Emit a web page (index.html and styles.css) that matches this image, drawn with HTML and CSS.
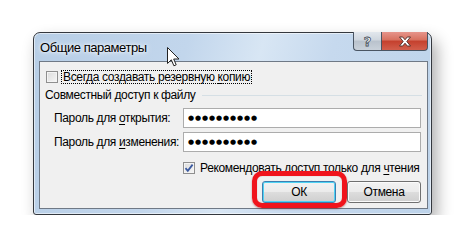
FILE: index.html
```html
<!DOCTYPE html>
<html lang="ru">
<head>
    <meta charset="UTF-8">
    <title>Общие параметры</title>
    <link rel="stylesheet" href="styles.css">
</head>
<body>
    <div class="window">
        <div class="titlebar">
            <span class="title">Общие параметры</span>
            <div class="caption">
                <div class="cap-btn help">?</div>
                <div class="cap-btn close">
                    <svg width="14" height="11" viewBox="0 0 14 11">
                        <path d="M1.5 1h3.2L7 3.8 9.3 1h3.2L8.8 5.5l3.7 4.5H9.3L7 7.2 4.7 10H1.5l3.7-4.5z" fill="#fff" stroke="#4b2a26" stroke-width="0.9"/>
                    </svg>
                </div>
            </div>
        </div>
        <div class="client">
            <div class="opt-row">
                <span class="check"></span>
                <span class="focus">Всегда создавать резервную <u>к</u>опию</span>
            </div>
            <div class="group-head">
                <span>Совместный доступ к файлу</span>
                <span class="rule"></span>
            </div>
            <div class="field">
                <span class="field-label">Пароль для <u>о</u>ткрытия:</span>
                <div class="pwd">●●●●●●●●●●</div>
            </div>
            <div class="field">
                <span class="field-label">Пароль для <u>и</u>зменения:</span>
                <div class="pwd">●●●●●●●●●●</div>
            </div>
            <div class="opt-row readonly">
                <span class="check on">
                    <svg width="10" height="10" viewBox="0 0 10 10">
                        <path d="M1.5 5.2l2.3 2.6L8.6 1.6" fill="none" stroke="#3b5aa0" stroke-width="1.8"/>
                    </svg>
                </span>
                <span>Рекомендовать доступ только для <u>ч</u>тения</span>
            </div>
            <div class="buttons">
                <div class="btn default">ОК<span class="mark"></span></div>
                <div class="btn">Отмена</div>
            </div>
        </div>
    </div>
    <svg class="cursor" width="13" height="20" viewBox="0 0 13 20">
        <path d="M0.5 0.5v16l3.8-3.7 2.6 6 2.3-1-2.5-5.8h5.3z" fill="#fff" stroke="#222" stroke-width="1"/>
    </svg>
</body>
</html>
```

FILE: styles.css
```css
*{
    margin: 0;
    padding: 0;
    box-sizing: border-box;
}
body{
    background: #fff;
    font-family: "Liberation Sans", Arial, sans-serif;
    font-size: 12px;
    letter-spacing: -0.35px;
    color: #000;
    white-space: nowrap;
}
u{
    text-decoration: underline;
    text-underline-offset: 2px;
}
.window{
    width: 399px;
    height: 183px;
    margin: 32px 0 0 33px;
    padding: 0 3px 5px 5px;
    border: 1px solid #34383e;
    border-radius: 7px 7px 3px 3px;
    background: linear-gradient(105deg, #b7cee6 0%, #c2d6ec 35%, #d8e6f4 52%, #c6d9ee 68%, #bdd3ea 100%);
    box-shadow: 5px 8px 16px rgba(0, 0, 0, 0.32), inset 0 0 0 1px rgba(255, 255, 255, 0.55);
}
.titlebar{
    height: 28px;
    display: flex;
    justify-content: space-between;
}
.title{
    padding: 7px 0 0 1px;
    font-size: 13px;
    letter-spacing: -0.45px;
    text-shadow: 0 0 6px #fff, 0 0 3px #fff;
}
.caption{
    display: flex;
    margin-top: -1px;
}
.cap-btn{
    height: 19px;
    border: 1px solid #4a5563;
    border-top: none;
    display: flex;
    justify-content: center;
    align-items: center;
}
.help{
    width: 28px;
    border-right: none;
    border-radius: 0 0 0 4px;
    background: linear-gradient(#e2e7ed, #cfd6de 45%, #b9c2cc 50%, #c9d1da);
    color: #fff;
    font-family: "DejaVu Sans", sans-serif;
    font-weight: bold;
    font-size: 13px;
    letter-spacing: 0;
    -webkit-text-stroke: 0.8px #434c58;
}
.close{
    width: 47px;
    border-radius: 0 0 4px 0;
    background: linear-gradient(#e6958b, #d7705f 45%, #c4402d 50%, #d25e4c);
}
.client{
    height: 148px;
    border: 1px solid #6f7986;
    background: #f0f0f0;
    display: flex;
    flex-direction: column;
}
.opt-row{
    display: flex;
    align-items: center;
    height: 14px;
    margin-top: 8px;
    padding-left: 6px;
}
.check{
    flex-shrink: 0;
    width: 12px;
    height: 12px;
    border: 1px solid #8f8f8f;
    background: linear-gradient(135deg, #dcdcdc, #f6f6f6);
    box-shadow: inset 0 0 0 1px #f4f4f4;
    margin-right: 3px;
    display: flex;
    justify-content: center;
    align-items: center;
}
.check.on{
    margin-right: 5px;
}
.focus{
    border: 1px dotted #000;
    padding: 0 1px;
    line-height: 12px;
}
.group-head{
    display: flex;
    align-items: center;
    margin-top: 4px;
    height: 14px;
    padding: 0 5px 0 5px;
}
.rule{
    flex: 1;
    height: 1px;
    margin: 0 0 0 6px;
    background: #d5dfe5;
}
.field{
    display: flex;
    align-items: center;
    padding-left: 14px;
    margin-top: 6px;
}
.field + .field{
    margin-top: 4px;
}
.field-label{
    flex-shrink: 0;
    width: 129px;
}
.pwd{
    width: 238px;
    height: 20px;
    border: 1px solid #acacac;
    background: #fff;
    padding-left: 4px;
    font-family: "DejaVu Sans", sans-serif;
    font-size: 7px;
    letter-spacing: 0.9px;
    line-height: 18px;
}
.readonly{
    padding-left: 143px;
    margin-top: 9px;
}
.buttons{
    display: flex;
    justify-content: flex-end;
    gap: 11px;
    padding-right: 6px;
    margin-top: 6px;
}
.btn{
    position: relative;
    width: 74px;
    height: 22px;
    border: 1px solid #707070;
    border-radius: 3px;
    background: linear-gradient(#f2f2f2, #ebebeb 49%, #dddddd 50%, #cfcfcf);
    box-shadow: inset 0 0 0 1px #fbfbfb;
    display: flex;
    justify-content: center;
    align-items: center;
}
.default{
    border-color: #3c7fb1;
    box-shadow: inset 0 0 0 1px #4fd3f4;
}
.mark{
    position: absolute;
    left: -11px;
    top: -11px;
    width: 95px;
    height: 37px;
    border: 5px solid #f0141c;
    border-radius: 10px;
    box-shadow: 0 1px 2px rgba(120, 0, 0, 0.4), inset 0 0 1px rgba(120, 0, 0, 0.4);
}
.cursor{
    position: absolute;
    left: 167px;
    top: 47px;
}
```
